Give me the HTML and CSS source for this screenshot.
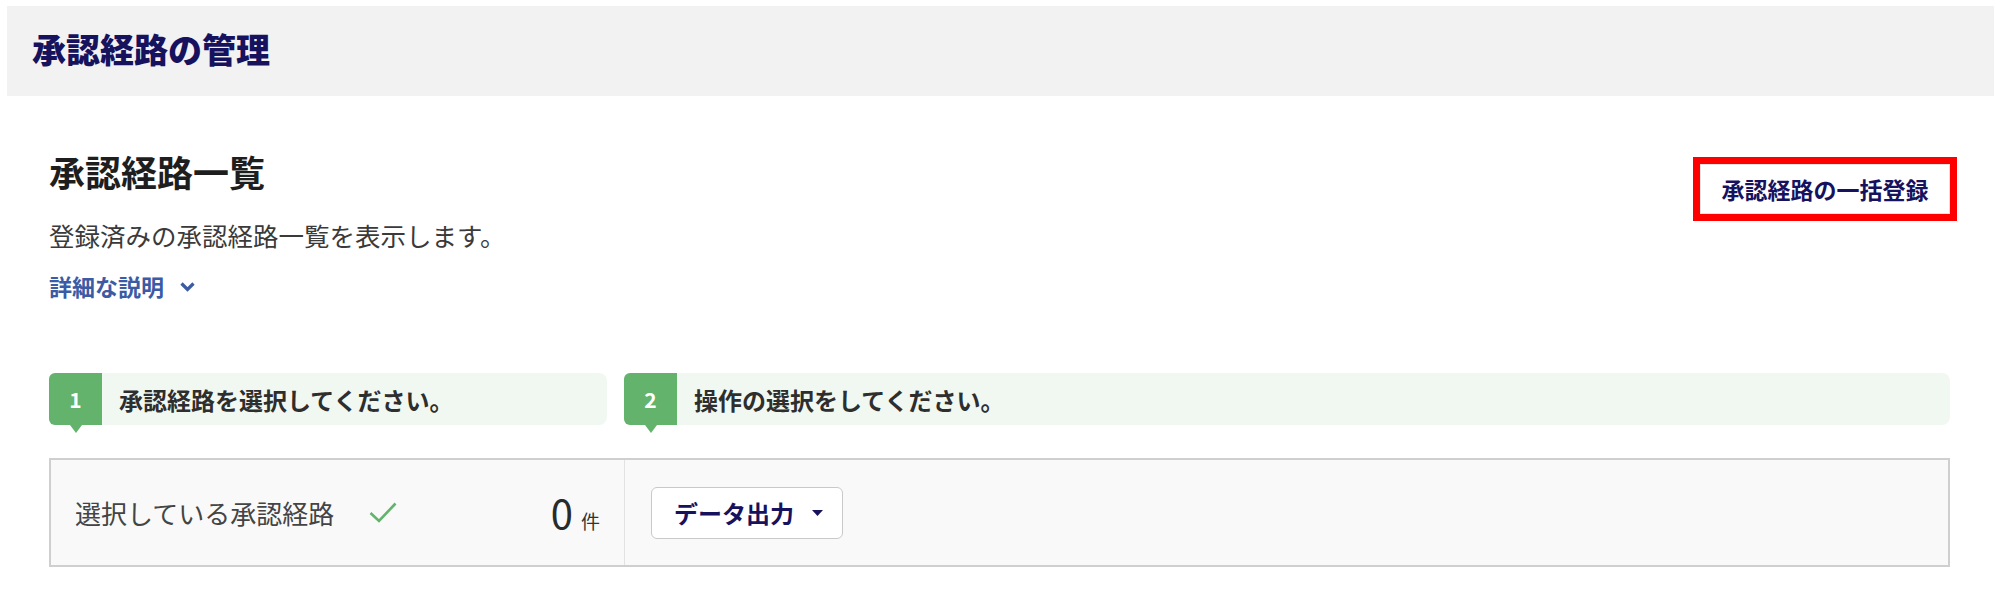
FILE: index.html
```html
<!DOCTYPE html>
<html>
<head>
	<meta charset="utf-8">
	<title>承認経路の管理</title>
	<link rel="stylesheet" href="styles.css">
</head>
<body>
	<div class="pageHeader">
		<h1 class="pageTitle">承認経路の管理</h1>
	</div>
	<div class="content">
		<div class="headRow">
			<div class="headText">
				<h2 class="listTitle">承認経路一覧</h2>
				<p class="lead">登録済みの承認経路一覧を表示します。</p>
				<a class="detailLink" href="#">詳細な説明
					<svg class="chevron" width="15" height="10" viewBox="0 0 15 10"><polyline points="1.5,1.5 7.5,7.5 13.5,1.5" fill="none" stroke="#3b5ba5" stroke-width="3.2"/></svg>
				</a>
			</div>
			<button class="bulkButton">承認経路の一括登録</button>
		</div>

		<div class="steps">
			<div class="step stepFirst">
				<span class="stepNum">1</span>
				<span class="stepText">承認経路を選択してください。</span>
			</div>
			<div class="step stepSecond">
				<span class="stepNum">2</span>
				<span class="stepText">操作の選択をしてください。</span>
			</div>
		</div>

		<div class="panel">
			<div class="panelLeft">
				<span class="selLabel">選択している承認経路</span>
				<svg class="check" width="28" height="21" viewBox="0 0 28 21"><polyline points="1.5,11 10,19 26.5,1.5" fill="none" stroke="#62b46c" stroke-width="2.6"/></svg>
				<span class="count"><span class="countNum">0</span><span class="countUnit">件</span></span>
			</div>
			<div class="panelRight">
				<button class="exportButton">データ出力
					<svg class="caret" width="11" height="6" viewBox="0 0 11 6"><polygon points="0,0 11,0 5.5,6" fill="#16125e"/></svg>
				</button>
			</div>
		</div>
	</div>
</body>
</html>
```

FILE: styles.css
```css
body{
	margin:0;
	font-family:"Noto Sans CJK JP","Noto Sans",sans-serif;
	color:#333;
	background:#fff;
}
.pageHeader{
	margin:6px 6px 0 7px;
	height:90px;
	background:#f2f2f2;
	display:flex;
	align-items:center;
	padding:0 0 4px 25px;
	box-sizing:border-box;
}
.pageTitle{
	margin:0;
	font-size:34px;
	line-height:40px;
	font-weight:900;
	color:#16125e;
}
.content{
	padding:0 50px 0 49px;
}
.headRow{
	display:flex;
	justify-content:space-between;
	align-items:flex-start;
	margin-top:52px;
}
.listTitle{
	margin:0;
	font-size:36px;
	line-height:47px;
	font-weight:bold;
	color:#1e1e1e;
}
.lead{
	margin:21px 0 0 0;
	font-size:25.5px;
	line-height:37px;
	color:#3a3a3a;
}
.detailLink{
	display:inline-flex;
	align-items:center;
	margin-top:16px;
	font-size:23px;
	line-height:34px;
	font-weight:bold;
	color:#3b5ba5;
	text-decoration:none;
}
.chevron{
	margin-left:16px;
	margin-top:2px;
}
.bulkButton{
	margin-top:16px;
	width:250px;
	height:50px;
	background:#fff;
	border:1px solid #e4e4e4;
	outline:7px solid #ff0000;
	font-family:inherit;
	font-size:23px;
	font-weight:bold;
	color:#16125e;
	padding:0;
}
.steps{
	display:flex;
	gap:17px;
	margin-top:70px;
	margin-bottom:33px;
}
.step{
	display:flex;
	align-items:center;
	height:52px;
	background:#f1f8f1;
	border-radius:8px;
}
.stepFirst{
	width:558px;
}
.stepSecond{
	flex:1;
}
.stepNum{
	position:relative;
	width:53px;
	height:52px;
	background:#63b36c;
	border-radius:6px 0 0 6px;
	color:#fff;
	font-size:21px;
	font-weight:bold;
	display:flex;
	align-items:center;
	justify-content:center;
}
.stepNum:after{
	content:"";
	position:absolute;
	left:21px;
	bottom:-8px;
	border-left:6px solid transparent;
	border-right:6px solid transparent;
	border-top:8px solid #63b36c;
}
.stepText{
	margin-left:17px;
	font-size:24px;
	font-weight:bold;
	color:#2e2e2e;
}
.panel{
	display:flex;
	height:109px;
	box-sizing:border-box;
	border:2px solid #cfcfcf;
	background:#f9f9f9;
}
.panelLeft{
	width:574px;
	box-sizing:border-box;
	border-right:1px solid #e2e2e2;
	display:flex;
	align-items:center;
	padding:0 24px 0 24px;
}
.selLabel{
	font-size:26px;
	color:#444;
}
.check{
	margin-left:35px;
}
.count{
	margin-left:auto;
	display:flex;
	align-items:baseline;
}
.countNum{
	font-size:40px;
	line-height:1;
	color:#2a2a2a;
}
.countUnit{
	font-size:19px;
	margin-left:8px;
	color:#333;
}
.panelRight{
	flex:1;
	display:flex;
	align-items:center;
	padding-left:26px;
}
.exportButton{
	display:flex;
	align-items:center;
	height:52px;
	width:192px;
	box-sizing:border-box;
	padding:0 19px 0 22px;
	background:#fff;
	border:1px solid #c9c9c9;
	border-radius:6px;
	font-family:inherit;
	font-size:24px;
	font-weight:bold;
	color:#16125e;
}
.caret{
	margin-left:auto;
}
```
